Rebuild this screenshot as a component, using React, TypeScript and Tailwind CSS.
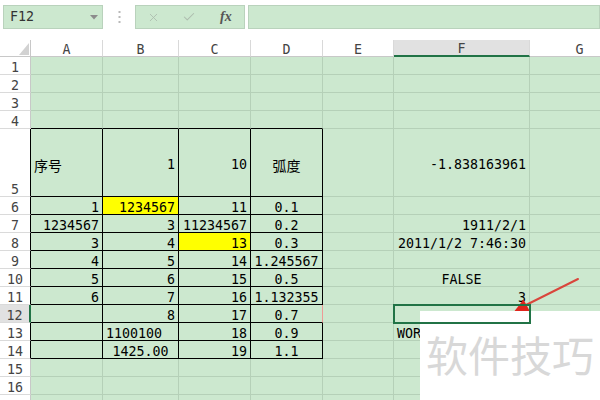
import { X, Check } from 'lucide-react';

type Align = 'l' | 'c' | 'r';
type Cell = { t: string; a?: Align; y?: boolean; zh?: boolean };
type Row = { n: number; tall?: boolean; c?: Record<string, Cell> };

const COLS = [
  { id: 'A', w: 'w-[72px]' },
  { id: 'B', w: 'w-[76px]' },
  { id: 'C', w: 'w-[72px]' },
  { id: 'D', w: 'w-[72px]' },
  { id: 'E', w: 'w-[71px]' },
  { id: 'F', w: 'w-[136px]' },
  { id: 'G', w: 'w-[100px]' },
];

const r = (t: string): Cell => ({ t, a: 'r' });
const c = (t: string): Cell => ({ t, a: 'c' });
const l = (t: string): Cell => ({ t, a: 'l' });

const ROWS: Row[] = [
  { n: 1 },
  { n: 2 },
  { n: 3 },
  { n: 4 },
  {
    n: 5,
    tall: true,
    c: { A: { t: '序号', a: 'l', zh: true }, B: r('1'), C: r('10'), D: { t: '弧度', a: 'c', zh: true }, F: r('-1.838163961') },
  },
  { n: 6, c: { A: r('1'), B: { t: '1234567', a: 'r', y: true }, C: r('11'), D: c('0.1') } },
  { n: 7, c: { A: r('1234567'), B: r('3'), C: r('11234567'), D: c('0.2'), F: r('1911/2/1') } },
  { n: 8, c: { A: r('3'), B: r('4'), C: { t: '13', a: 'r', y: true }, D: c('0.3'), F: r('2011/1/2 7:46:30') } },
  { n: 9, c: { A: r('4'), B: r('5'), C: r('14'), D: c('1.245567') } },
  { n: 10, c: { A: r('5'), B: r('6'), C: r('15'), D: c('0.5'), F: c('FALSE') } },
  { n: 11, c: { A: r('6'), B: r('7'), C: r('16'), D: c('1.132355'), F: r('3') } },
  { n: 12, c: { B: r('8'), C: r('17'), D: c('0.7') } },
  { n: 13, c: { B: l('1100100'), C: r('18'), D: c('0.9'), F: l('WORD') } },
  { n: 14, c: { B: c('1425.00'), C: r('19'), D: c('1.1') } },
  { n: 15 },
  { n: 16 },
  { n: 17 },
];

const TABLE_COLS = 'ABCD';

function SheetCell({ col, row }: { col: { id: string; w: string }; row: Row }) {
  const inTable = row.n >= 5 && row.n <= 14 && TABLE_COLS.includes(col.id);
  const topEdge = row.n === 4 && TABLE_COLS.includes(col.id);
  const data = row.c?.[col.id];
  const selected = row.n === 12 && col.id === 'F';

  const rightBorder = inTable
    ? row.n === 12 && col.id === 'D'
      ? 'border-r-[#ee9a96]'
      : 'border-r-black'
    : 'border-r-[#b5d0b8]';
  const bottomBorder = inTable || topEdge ? 'border-b-black' : 'border-b-[#b5d0b8]';
  const align =
    data?.a === 'l' ? 'justify-start pl-[3px]' : data?.a === 'c' ? 'justify-center' : 'justify-end pr-[3px]';

  return (
    <div
      className={`relative flex shrink-0 border-r border-b ${col.w} ${rightBorder} ${bottomBorder} ${
        data?.y ? 'bg-[#ffff00]' : 'bg-[#cce8cf]'
      } ${row.tall ? 'items-center pt-[5px]' : 'items-end'} ${align}`}
    >
      {data && (
        <span
          className={`whitespace-nowrap text-black ${
            data.zh
              ? "font-['Noto_Sans_CJK_SC',sans-serif] text-[14px] leading-[16px]"
              : 'leading-[12px]'
          }`}
        >
          {data.t}
        </span>
      )}
      {selected && (
        <div className="absolute -left-[1px] -top-[1px] -right-[2px] -bottom-[2px] z-10 border-2 border-[#217346]" />
      )}
    </div>
  );
}

function RowHeader({ row }: { row: Row }) {
  const sel = row.n === 12;
  const edge = sel
    ? 'border-r-2 border-r-[#217346] bg-[#e1e1e1]'
    : row.n >= 5 && row.n <= 14
      ? 'border-r border-r-black bg-white'
      : 'border-r border-r-[#c8c8c8] bg-white';
  // the last row is only a sliver at the window's bottom edge, its number sits below it
  return (
    <div className={`flex w-[31px] shrink-0 items-end justify-center border-b border-b-[#dadada] ${edge}`}>
      {row.n < 17 && <span className="leading-[12px] text-[#444]">{row.n}</span>}
    </div>
  );
}

function FormulaBar() {
  return (
    <div className="h-[40px] bg-white pt-[5px]">
      <div className="flex h-[24px]">
        <div className="ml-[3px] flex w-[100px] items-center justify-between border border-[#b9d2bc] bg-[#cce8cf] pl-[6px] pr-[4px]">
          <span className="text-[#333]">F12</span>
          <svg width="8" height="5" viewBox="0 0 8 5">
            <path d="M0 0h8L4 4.5z" fill="#8c8c8c" />
          </svg>
        </div>
        <div className="flex w-[32px] items-center justify-center">
          <svg width="3" height="12" viewBox="0 0 3 12">
            <rect x="0.5" y="0" width="2" height="2" fill="#b9b9b9" />
            <rect x="0.5" y="5" width="2" height="2" fill="#b9b9b9" />
            <rect x="0.5" y="10" width="2" height="2" fill="#b9b9b9" />
          </svg>
        </div>
        <div className="flex w-[110px] items-center border border-[#b9d2bc] bg-[#cce8cf]">
          <X className="ml-[11px] h-[13px] w-[13px] text-[#adbcae]" strokeWidth={1.6} />
          <Check className="ml-[22px] h-[14px] w-[14px] text-[#adbcae]" strokeWidth={1.8} />
          <span className="ml-[24px] font-['Liberation_Serif',serif] text-[14px] font-bold italic leading-none text-[#555]">
            fx
          </span>
        </div>
        <div className="ml-[3px] flex-1 border border-[#b9d2bc] bg-[#cce8cf]" />
      </div>
    </div>
  );
}

function ColumnHeaders() {
  return (
    <div className="flex h-[17px]">
      <div className="relative w-[31px] shrink-0 border-r border-b border-[#c8c8c8] bg-white">
        <svg className="absolute left-[19px] top-[3px]" width="10" height="12" viewBox="0 0 10 12">
          <path d="M10 0V12H0z" fill="#d2d2d2" />
        </svg>
      </div>
      {COLS.map((col) => (
        <div
          key={col.id}
          className={`flex shrink-0 items-end justify-center border-r border-r-[#d9d9d9] ${col.w} ${
            col.id === 'F' ? 'border-b-2 border-b-[#217346] bg-[#e1e1e1]' : 'border-b border-b-[#c8c8c8] bg-white'
          }`}
        >
          <span className="leading-[12px] text-[#444]">{col.id}</span>
        </div>
      ))}
    </div>
  );
}

export default function App() {
  return (
    <div className="relative h-[400px] w-[600px] overflow-hidden bg-white font-['DejaVu_Sans_Mono','Noto_Sans_CJK_SC',monospace] text-[13.3px]">
      <FormulaBar />
      <ColumnHeaders />
      {ROWS.map((row) => (
        <div key={row.n} className={`flex ${row.tall ? 'h-[68px]' : 'h-[18px]'}`}>
          <RowHeader row={row} />
          {COLS.map((col) => (
            <SheetCell key={col.id} col={col} row={row} />
          ))}
        </div>
      ))}

      <svg className="pointer-events-none absolute left-0 top-0" width="600" height="400" viewBox="0 0 600 400">
        <line x1="578" y1="279" x2="522" y2="307" stroke="#d9453c" strokeWidth="2" strokeLinecap="round" />
        <path d="M513 313 L523.5 299.5 L530 311.5 Z" fill="#e0241c" />
      </svg>

      <div className="absolute left-[420px] top-[311px] h-[89px] w-[180px] bg-white pl-[6px] pt-[22px]">
        <span className="font-['Noto_Sans_CJK_SC',sans-serif] text-[42px] leading-none text-[#d8d8d8]">软件技巧</span>
      </div>
    </div>
  );
}
